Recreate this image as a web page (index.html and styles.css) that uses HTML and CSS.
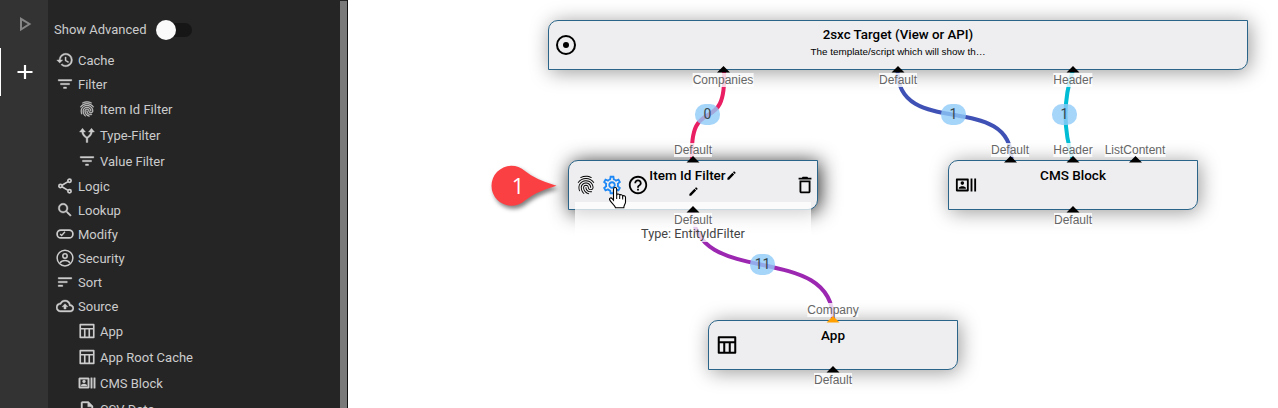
FILE: index.html
```
<!DOCTYPE html>
<html lang="en">
<head>
<meta charset="utf-8">
<title>Visual Query</title>
<link rel="stylesheet" href="styles.css">
</head>
<body>
<svg class="defs" width="0" height="0">
  <symbol id="history" viewBox="0 0 24 24"><path d="M13 3a9 9 0 0 0-9 9H1l3.89 3.89.07.14L9 12H6c0-3.87 3.13-7 7-7s7 3.13 7 7-3.13 7-7 7c-1.93 0-3.68-.79-4.94-2.06l-1.42 1.42A8.954 8.954 0 0 0 13 21a9 9 0 0 0 0-18zm-1 5v5l4.28 2.54.72-1.21-3.5-2.08V8H12z"/></symbol>
  <symbol id="filter" viewBox="0 0 24 24"><path d="M10 18h4v-2h-4v2zM3 6v2h18V6H3zm3 7h12v-2H6v2z"/></symbol>
  <symbol id="sort" viewBox="0 0 24 24"><path d="M3 18h6v-2H3v2zM3 6v2h18V6H3zm0 7h12v-2H3v2z"/></symbol>
  <symbol id="finger" viewBox="0 0 24 24"><path d="M17.81 4.47c-.08 0-.16-.02-.23-.06C15.66 3.42 14 3 12.01 3c-1.98 0-3.86.47-5.57 1.41-.24.13-.54.04-.68-.2-.13-.24-.04-.55.2-.68C7.82 2.52 9.86 2 12.01 2c2.13 0 3.99.47 6.03 1.52.25.13.34.43.21.67-.09.18-.26.28-.44.28zM3.5 9.72c-.1 0-.2-.03-.29-.09-.23-.16-.28-.47-.12-.7.99-1.4 2.25-2.5 3.75-3.27C9.98 4.04 14 4.03 17.15 5.65c1.5.77 2.76 1.86 3.75 3.25.16.22.11.54-.12.7-.23.16-.54.11-.7-.12-.9-1.26-2.04-2.25-3.39-2.94-2.87-1.47-6.54-1.47-9.4.01-1.36.7-2.5 1.7-3.4 2.96-.08.14-.23.21-.39.21zm6.25 12.07c-.13 0-.26-.05-.35-.15-.87-.87-1.34-1.43-2.01-2.64-.69-1.23-1.05-2.73-1.05-4.34 0-2.97 2.54-5.39 5.66-5.39s5.66 2.42 5.66 5.39c0 .28-.22.5-.5.5s-.5-.22-.5-.5c0-2.42-2.09-4.39-4.66-4.39-2.57 0-4.66 1.97-4.66 4.39 0 1.44.32 2.77.93 3.85.64 1.15 1.08 1.64 1.85 2.42.19.2.19.51 0 .71-.11.1-.24.15-.37.15zm7.17-1.85c-1.19 0-2.24-.3-3.1-.89-1.49-1.01-2.38-2.65-2.38-4.39 0-.28.22-.5.5-.5s.5.22.5.5c0 1.41.72 2.74 1.94 3.56.71.48 1.54.71 2.54.71.24 0 .64-.03 1.04-.1.27-.05.53.13.58.41.05.27-.13.53-.41.58-.57.11-1.07.12-1.21.12zM14.91 22c-.04 0-.09-.01-.13-.02-1.59-.44-2.63-1.03-3.72-2.1-1.4-1.39-2.17-3.24-2.17-5.22 0-1.62 1.38-2.94 3.08-2.94 1.7 0 3.08 1.32 3.08 2.94 0 1.07.93 1.94 2.08 1.94s2.08-.87 2.08-1.94c0-3.77-3.25-6.83-7.25-6.83-2.84 0-5.44 1.58-6.61 4.03-.39.81-.59 1.76-.59 2.8 0 .78.07 2.01.67 3.61.1.26-.03.55-.29.64-.26.1-.55-.04-.64-.29-.49-1.31-.73-2.61-.73-3.96 0-1.2.23-2.29.68-3.24 1.33-2.79 4.28-4.6 7.51-4.6 4.55 0 8.25 3.51 8.25 7.83 0 1.62-1.38 2.94-3.08 2.94s-3.08-1.32-3.08-2.94c0-1.07-.93-1.94-2.08-1.94s-2.08.87-2.08 1.94c0 1.71.66 3.31 1.87 4.51.95.94 1.86 1.46 3.27 1.85.27.07.42.35.35.61-.05.23-.26.38-.47.38z"/></symbol>
  <symbol id="route" viewBox="0 0 24 24"><path d="M2 8l4-5 4 5H7.2c.4 3.200 2.200 4.800 4.800 6.600 2.600-1.800 4.400-3.400 4.800-6.600H14l4-5 4 5h-2.900c-.4 4.300-2.900 6.300-6 8.400V22h-2.200v-5.600C7.800 14.300 5.300 12.300 4.900 8z"/></symbol>
  <symbol id="share" viewBox="0 0 24 24"><g fill="none" stroke="currentColor" stroke-width="2.200"><circle cx="18" cy="5" r="2.200"/><circle cx="6" cy="12" r="2.200"/><circle cx="18" cy="19" r="2.200"/><path d="M8 11l8-4.800M8 13l8 4.800"/></g></symbol>
  <symbol id="search" viewBox="0 0 24 24"><path d="M15.500 14h-.79l-.28-.27A6.471 6.471 0 0 0 16 9.500 6.500 6.500 0 1 0 9.500 16c1.610 0 3.090-.59 4.230-1.570l.27.28v.79l5 4.990L20.490 19l-4.990-5zm-6 0C7.010 14 5 11.990 5 9.500S7.010 5 9.500 5 14 7.010 14 9.500 11.990 14 9.500 14z"/></symbol>
  <symbol id="modify" viewBox="0 0 24 24"><g fill="none" stroke="currentColor" stroke-width="2.300"><rect x="1.500" y="6.800" width="21" height="10.400" rx="5"/><path stroke-width="1.700" d="M5.500 12l2 2L12 9"/></g></symbol>
  <symbol id="account" viewBox="0 0 24 24"><g fill="none" stroke="currentColor" stroke-width="2"><circle cx="12" cy="12" r="10.500"/><circle cx="12" cy="9.300" r="2.900"/><path d="M5.500 18.500c2.500-4.200 10.500-4.200 13 0"/></g></symbol>
  <symbol id="cloud" viewBox="0 0 24 24"><path d="M19.350 10.040A7.490 7.490 0 0 0 12 4C9.110 4 6.600 5.640 5.350 8.040A5.994 5.994 0 0 0 0 14c0 3.310 2.690 6 6 6h13c2.760 0 5-2.240 5-5 0-2.640-2.050-4.780-4.650-4.960zM19 18H6c-2.210 0-4-1.790-4-4 0-2.050 1.530-3.760 3.560-3.970l1.070-.11.5-.95A5.469 5.469 0 0 1 12 6c2.620 0 4.880 1.860 5.390 4.430l.3 1.500 1.530.11A2.980 2.980 0 0 1 22 15c0 1.650-1.350 3-3 3zM8 13h2.550v3h2.900v-3H16l-4-4z"/></symbol>
  <symbol id="table" viewBox="0 0 24 24"><path fill="none" stroke="currentColor" stroke-width="2.200" stroke-linejoin="round" d="M3 3.500h18v17H3zM3 9h18M9 9v11.500M15 9v11.500"/></symbol>
  <symbol id="actors" viewBox="0 0 24 24"><path d="M21 5h2v14h-2zM17 5h2v14h-2zM14 5H2c-.55 0-1 .45-1 1v12c0 .55.450 1 1 1h12c.55 0 1-.45 1-1V6c0-.55-.45-1-1-1zm-1 12H3V7h10v10z"/><circle cx="8" cy="9.940" r="1.950"/><path d="M11.890 15.350c0-1.300-2.590-1.950-3.890-1.950s-3.890.65-3.890 1.950V16h7.780z"/></symbol>
  <symbol id="file" viewBox="0 0 24 24"><path d="M14 2H6c-1.100 0-2 .9-2 2v16c0 1.100.890 2 1.990 2H18c1.100 0 2-.9 2-2V8zM6 20V4h7v5h5v11z"/></symbol>
  <symbol id="adjust" viewBox="0 0 24 24"><circle cx="12" cy="12" r="9" fill="none" stroke="currentColor" stroke-width="2"/><circle cx="12" cy="12" r="3"/></symbol>
  <symbol id="gear" viewBox="0 0 24 24"><path d="M19.430 12.980c.04-.32.07-.64.07-.98 0-.34-.03-.66-.07-.98l2.110-1.650c.19-.15.24-.42.12-.64l-2-3.460c-.09-.16-.26-.25-.44-.25-.06 0-.12.010-.17.030l-2.490 1c-.52-.4-1.080-.73-1.690-.98l-.38-2.650C14.460 2.180 14.250 2 14 2h-4c-.25 0-.46.18-.49.42l-.38 2.650c-.61.25-1.170.59-1.690.98l-2.490-1c-.06-.02-.12-.03-.18-.03-.17 0-.34.09-.43.25l-2 3.460c-.13.22-.07.49.12.64l2.110 1.650c-.04.32-.07.65-.07.98 0 .33.030.66.070.98l-2.110 1.650c-.19.15-.24.42-.12.64l2 3.460c.09.16.26.25.44.25.06 0 .12-.01.17-.03l2.490-1c.52.4 1.080.73 1.690.98l.38 2.650c.03.24.24.42.49.42h4c.25 0 .46-.18.49-.42l.38-2.650c.61-.25 1.170-.59 1.690-.98l2.490 1c.06.02.12.03.18.03.17 0 .34-.09.43-.25l2-3.460c.12-.22.07-.49-.12-.64l-2.110-1.650zm-1.980-1.710c.04.31.05.52.05.73 0 .21-.02.43-.05.73l-.14 1.130.89.7 1.080.84-.7 1.210-1.270-.51-1.040-.42-.9.68c-.43.32-.84.56-1.250.73l-1.060.43-.16 1.130-.2 1.350h-1.400l-.19-1.350-.16-1.130-1.060-.43c-.43-.18-.83-.41-1.230-.71l-.91-.7-1.060.43-1.270.51-.7-1.210 1.080-.84.89-.7-.14-1.130c-.03-.31-.05-.54-.05-.74s.02-.43.05-.73l.14-1.130-.89-.7-1.080-.84.7-1.210 1.270.51 1.040.42.9-.68c.43-.32.84-.56 1.250-.73l1.060-.43.16-1.130.2-1.350h1.390l.19 1.350.16 1.130 1.060.43c.43.18.83.41 1.230.71l.91.7 1.060-.43 1.270-.51.7 1.210-1.070.85-.89.7.14 1.130zM12 8c-2.210 0-4 1.790-4 4s1.790 4 4 4 4-1.790 4-4-1.790-4-4-4zm0 6c-1.100 0-2-.9-2-2s.9-2 2-2 2 .9 2 2-.9 2-2 2z"/></symbol>
  <symbol id="help" viewBox="0 0 24 24"><path d="M11 18h2v-2h-2v2zm1-16C6.480 2 2 6.480 2 12s4.480 10 10 10 10-4.480 10-10S17.520 2 12 2zm0 18c-4.410 0-8-3.590-8-8s3.590-8 8-8 8 3.590 8 8-3.590 8-8 8zm0-14c-2.210 0-4 1.790-4 4h2c0-1.100.9-2 2-2s2 .9 2 2c0 2-3 1.750-3 5h2c0-2.250 3-2.500 3-5 0-2.210-1.790-4-4-4z"/></symbol>
  <symbol id="trash" viewBox="0 0 24 24"><path d="M6 19c0 1.100.9 2 2 2h8c1.100 0 2-.9 2-2V7H6v12zM8 9h8v10H8V9zm7.500-5l-1-1h-5l-1 1H5v2h14V4z"/></symbol>
  <symbol id="pencil" viewBox="0 0 24 24"><path d="M3 17.250V21h3.750L17.810 9.940l-3.750-3.750zM20.710 7.040a1 1 0 0 0 0-1.410l-2.340-2.340a1 1 0 0 0-1.410 0l-1.830 1.830 3.750 3.750z"/></symbol>
</svg>
<div class="app">
  <nav class="rail">
    <div class="tab"><svg width="24" height="24" viewBox="0 0 24 24"><path d="M8 6.800v10.700L16.500 12z" fill="none" stroke="#868686" stroke-width="2"/></svg></div>
    <div class="tab active"><svg width="24" height="24" viewBox="0 0 24 24"><path d="M12 5v14M4.500 12h15" fill="none" stroke="#fff" stroke-width="2.200"/></svg></div>
  </nav>
  <aside class="panel">
    <div class="advanced">Show Advanced<span class="toggle"><span class="knob"></span></span></div>
    <div class="tree">
      <div class="row"><svg class="ic"><use href="#history"/></svg>Cache</div>
      <div class="row"><svg class="ic"><use href="#filter"/></svg>Filter</div>
      <div class="row child"><svg class="ic"><use href="#finger"/></svg>Item Id Filter</div>
      <div class="row child"><svg class="ic"><use href="#route"/></svg>Type-Filter</div>
      <div class="row child"><svg class="ic"><use href="#filter"/></svg>Value Filter</div>
      <div class="row"><svg class="ic"><use href="#share"/></svg>Logic</div>
      <div class="row"><svg class="ic"><use href="#search"/></svg>Lookup</div>
      <div class="row"><svg class="ic"><use href="#modify"/></svg>Modify</div>
      <div class="row"><svg class="ic"><use href="#account"/></svg>Security</div>
      <div class="row"><svg class="ic"><use href="#sort"/></svg>Sort</div>
      <div class="row"><svg class="ic"><use href="#cloud"/></svg>Source</div>
      <div class="row child"><svg class="ic"><use href="#table"/></svg>App</div>
      <div class="row child"><svg class="ic"><use href="#table"/></svg>App Root Cache</div>
      <div class="row child"><svg class="ic"><use href="#actors"/></svg>CMS Block</div>
      <div class="row child"><svg class="ic"><use href="#file"/></svg>CSV Data</div>
    </div>
    <div class="scrollbar"></div>
  </aside>
  <main class="canvas">
    <section class="node target"><svg class="nic"><use href="#adjust"/></svg><div class="text"><b>2sxc Target (View or API)</b><small>The template/script which will show th…</small></div></section>
    <section class="node item hover"><span class="tools"><svg class="nic"><use href="#finger"/></svg><svg class="nic blue"><use href="#gear"/></svg><svg class="nic"><use href="#help"/></svg></span><div class="text"><b>Item Id Filter<svg class="pen"><use href="#pencil"/></svg></b><svg class="pen"><use href="#pencil"/></svg></div><svg class="nic del"><use href="#trash"/></svg></section>
    <section class="node cms"><svg class="nic"><use href="#actors"/></svg><div class="text"><b>CMS Block</b></div></section>
    <section class="node appn"><svg class="nic"><use href="#table"/></svg><div class="text"><b>App</b></div></section>

    <svg class="wires" width="930" height="408" viewBox="348 0 930 408">
      <g fill="none" stroke-width="4">
        <path stroke="#e91e63" d="M724 70C727 140 689 90 692 160"/>
        <path stroke="#3f51b5" d="M897.500 70C897.500 140 1011.500 90 1011.500 160"/>
        <path stroke="#00bcd4" d="M1073 70Q1058 115 1073 160"/>
        <path stroke="#9c27b0" d="M692.500 210C692.500 290 833 240 833 320"/>
      </g>
    </svg>
    <div class="hint">Type: EntityIdFilter</div>
    <div class="labels">
      <span class="lb l1">Companies</span><span class="lb l2">Default</span><span class="lb l3">Header</span>
      <span class="lb l4">Default</span><span class="lb l5">Default</span><span class="lb l6">Header</span><span class="lb l7">ListContent</span>
      <span class="lb l8">Default</span><span class="lb l9">Default</span><span class="lb l10">Company</span><span class="lb l11">Default</span>
    </div>
    <span class="count c1">0</span><span class="count c2">1</span><span class="count c3">1</span><span class="count c4">11</span>
    <svg class="wires" width="930" height="408" viewBox="348 0 930 408">
      <path d="M717 72.500l6.500-6.500 6.500 6.500zM891.500 72.500l6.500-6.500 6.500 6.500zM1066.500 72.500l6.500-6.500 6.500 6.500zM686.500 162.500l6.500-6.500 6.500 6.500zM1004 162.500l6.500-6.500 6.500 6.500zM1066.500 162.500l6.500-6.500 6.500 6.500zM1129 162.500l6.500-6.500 6.500 6.500zM686.500 212.500l6.500-6.500 6.500 6.500zM1066.500 212.500l6.500-6.500 6.500 6.500zM826.500 372.500l6.500-6.500 6.500 6.500z"/>
      <path fill="#ffa000" d="M826.500 322.500l6.500-6.500 6.500 6.500z"/>
    </svg>
    <svg class="marker" width="80" height="56" viewBox="0 0 80 56"><path d="M66.500 23.700Q45 30 35 38.500A20 20 0 1 1 35 9Q45 17.500 66.500 23.700z" fill="#fb4044"/></svg>
    <span class="step">1</span>
    <svg class="cursor" width="20" height="24" viewBox="0 0 20 24"><path d="M5.500 14.200V3.200c0-2.200 3.200-2.200 3.200 0v6c.2-1.700 2.900-1.500 3 .4.400-1.500 2.900-1.200 3 .7.600-1.200 2.800-.8 2.800 1v5c0 1.600-1.700 2.800-1.700 5.500H7.500c0-2.300-4.700-5-5.900-8-.6-1.800 1.600-2.500 2.600-1.200z" fill="#fff" stroke="#000" stroke-width="1.100"/><path d="M8.700 9v4M11.700 10v3M14.700 10.500v3" stroke="#000" fill="none"/></svg>
  </main>
</div>
</body>
</html>
```
FILE: styles.css
```
* { box-sizing: border-box; }
body { margin: 0; overflow: hidden; font-family: Roboto, "Liberation Sans", sans-serif; background: #fff; }
svg { fill: currentColor; flex: none; }
.defs { position: absolute; }
.app { display: flex; height: 408px; }
.rail { width: 48px; background: #333; }
.tab { height: 48px; display: flex; align-items: center; justify-content: center; border-left: 1px solid transparent; }
.tab.active { border-left-color: #fff; }
.panel { position: relative; width: 300px; height: 408px; overflow: hidden; background: #252526; color: #ccc; font-size: 13px; border-right: 1px solid #111; }
.advanced { height: 48px; padding: 11px 0 0 6px; display: flex; align-items: center; }
.toggle { width: 36px; height: 14px; border-radius: 7px; background: #161617; margin-left: 9px; display: flex; align-items: center; }
.knob { width: 20px; height: 20px; border-radius: 50%; background: #fafafa; flex: none; }
.row { height: 24px; padding-left: 8px; display: flex; align-items: center; gap: 4px; }
.child { height: 26px; padding-left: 30px; }
.ic { width: 18px; height: 18px; stroke: currentColor; stroke-width: .5px; }
.scrollbar { position: absolute; right: 0; top: 1px; width: 7px; height: 407px; background: #797979; }
.canvas { position: relative; width: 930px; height: 408px; overflow: hidden; background: #fff; }
.node { position: absolute; width: 250px; height: 50px; border: 1px solid #2a6488; border-radius: 10px 0; background: #eeeef0; box-shadow: 2px 2px 20px rgba(0,0,0,.4); display: flex; align-items: center; padding: 0 8px; color: #000; }
.target { left: 200px; top: 20px; width: 700px; padding-left: 6px; }
.item { left: 220px; top: 160px; }
.cms { left: 600px; top: 160px; padding-left: 6px; }
.appn { left: 360px; top: 320px; padding-left: 7px; }
.hover { box-shadow: 2px 2px 20px rgba(0,0,0,.85); }
.text { position: absolute; inset: 6px 0 0; display: flex; flex-direction: column; align-items: center; line-height: 16px; }
.text b { font-size: 13.500px; font-weight: 500; display: flex; align-items: center; }
.target b { font-size: 13.300px; }
.text small { font: 9.900px/16px "Liberation Sans", Arial, sans-serif; margin-top: 1px; }
.pen { width: 11px; height: 11px; margin-top: 3px; }
.text b .pen { margin: 0; }
.nic { width: 22px; height: 22px; }
.target .nic { width: 24px; height: 24px; margin-left: -1px; }
.tools { display: flex; gap: 4px; margin-left: -2px; }
.tools .nic { width: 22px; height: 22px; }
.blue { color: #1e88f5; }
.del { margin-left: auto; margin-right: -7px; }
.wires { position: absolute; left: 0; top: 0; }
.hint { position: absolute; left: 227px; top: 202px; width: 236px; height: 40px; padding-top: 24px; line-height: 15px; font-size: 12.700px; text-align: center; color: #444; background: rgba(255,255,255,.75); }
.lb { position: absolute; transform: translateX(-50%); font: 12px/14px "Liberation Sans", Arial, sans-serif; color: #666; background: rgba(255,255,255,.8); white-space: nowrap; }
.l1 { left: 375px; top: 73px; } .l2 { left: 550px; top: 73px; } .l3 { left: 725px; top: 73px; }
.l4 { left: 345px; top: 143px; } .l5 { left: 662px; top: 143px; } .l6 { left: 725px; top: 143px; } .l7 { left: 787px; top: 143px; }
.l8 { left: 345px; top: 213px; } .l9 { left: 725px; top: 213px; } .l10 { left: 485px; top: 303px; } .l11 { left: 485px; top: 373px; }
.count { position: absolute; width: 25px; height: 21px; border-radius: 10px; background: rgba(144,202,249,.8); color: #37474f; font-size: 14px; line-height: 21px; text-align: center; }
.c1 { left: 347px; top: 104px; } .c2 { left: 593px; top: 104px; } .c3 { left: 704px; top: 104px; } .c4 { left: 402px; top: 254px; }
.marker { position: absolute; left: 142px; top: 162px; filter: drop-shadow(2px 3px 2px rgba(0,0,0,.5)); }
.step { position: absolute; left: 160px; top: 173px; width: 20px; text-align: center; font: 22px/24px "Open Sans", "Noto Sans", sans-serif; color: #fff; }
.cursor { position: absolute; left: 260px; top: 186px; }
```
